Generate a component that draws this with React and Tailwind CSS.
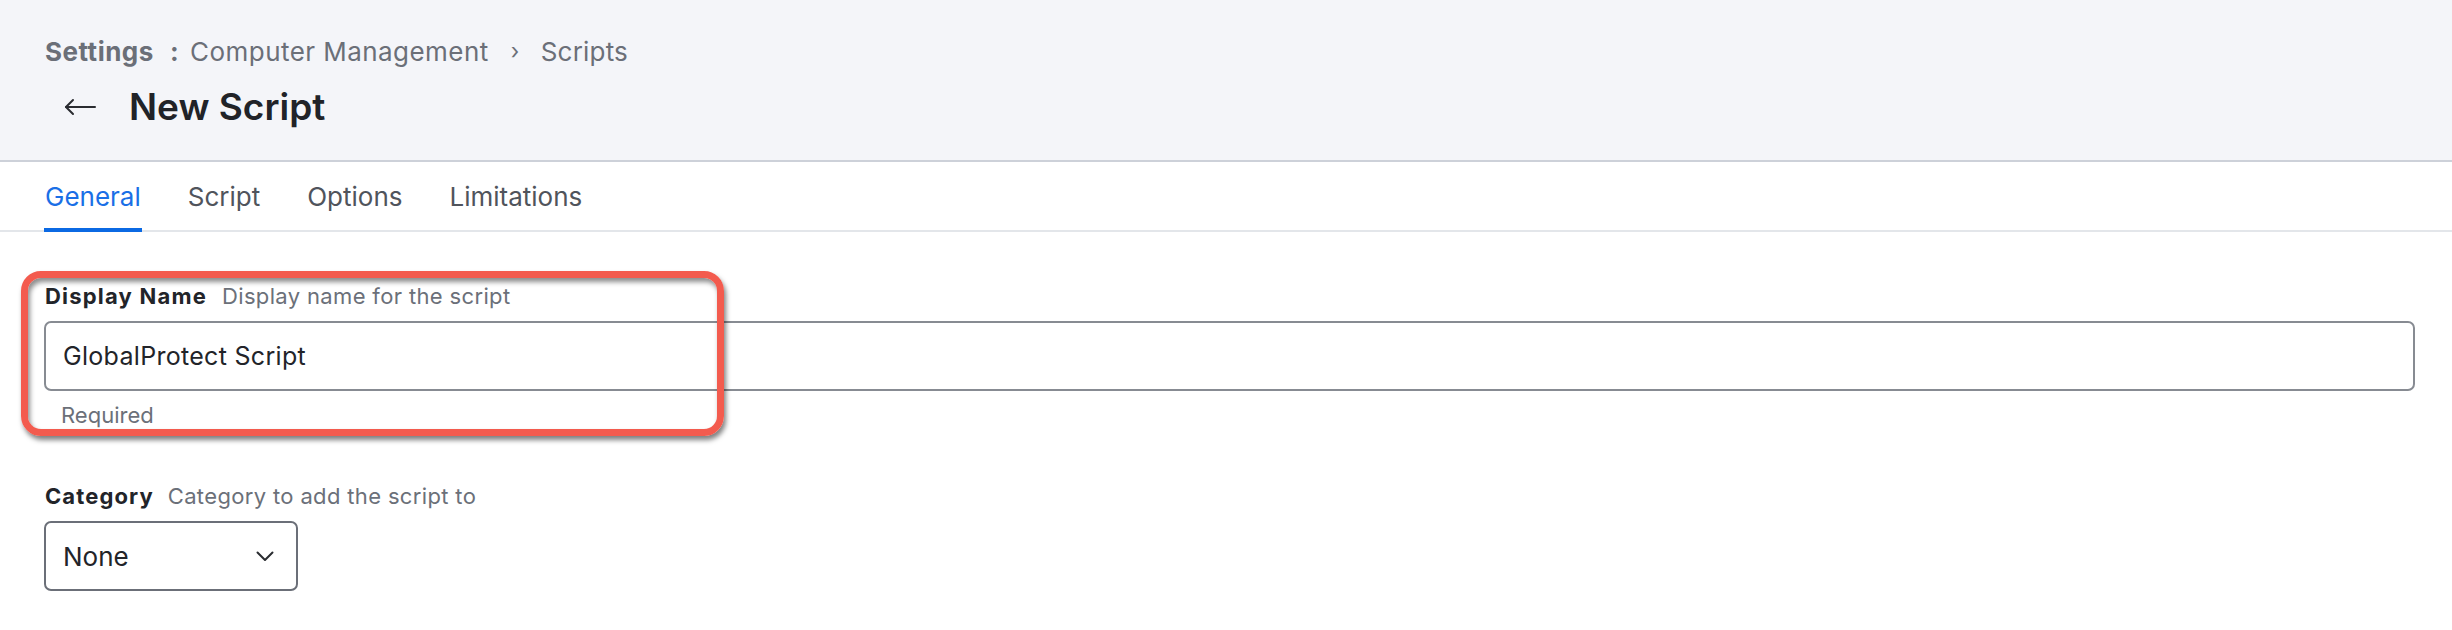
import { useState } from 'react'

const tabs = ['General', 'Script', 'Options', 'Limitations']

function BackArrow() {
  return (
    <svg width="32" height="18" viewBox="0 0 32 18" fill="none" stroke="#2a2c31" strokeWidth="2" strokeLinecap="round" strokeLinejoin="round">
      <path d="M31 9H2" />
      <path d="M9 2L2 9l7 7" />
    </svg>
  )
}

function Chevron() {
  return (
    <svg width="18" height="11" viewBox="0 0 18 11" fill="none" stroke="#2a2c31" strokeWidth="2" strokeLinecap="round" strokeLinejoin="round">
      <path d="M1.5 1.5L9 9l7.5-7.5" />
    </svg>
  )
}

export default function App() {
  const [active, setActive] = useState('General')
  const [name, setName] = useState('GlobalProtect Script')

  return (
    <div className="min-h-[630px] w-full bg-white font-['Inter',sans-serif]">
      {/* Header */}
      <header className="h-[162px] border-b-2 border-[#cdd1d9] bg-[#f4f5f9] pl-[45px] pt-[34px]">
        <nav className="flex h-[34px] items-center text-[26px] tracking-[0.5px] text-[#6b6f78]">
          <span className="font-bold">Settings</span>
          <span className="ml-[16px] mr-[11px] font-bold">:</span>
          <span className="tracking-[0.45px]">Computer Management</span>
          <span className="ml-[22px] mr-[21px] text-[22px]">›</span>
          <span className="tracking-[0.2px]">Scripts</span>
        </nav>
        <div className="mt-[17px] flex h-[44px] items-center">
          <button className="ml-[19px] mr-[33px] flex items-center">
            <BackArrow />
          </button>
          <h1 className="text-[37px] font-semibold text-[#212328]">New Script</h1>
        </div>
      </header>

      {/* Tabs */}
      <div className="flex h-[70px] gap-[47px] border-b-2 border-[#e3e6ea] pl-[45px]">
        {tabs.map((t) => (
          <button
            key={t}
            onClick={() => setActive(t)}
            className={`relative flex h-full items-center text-[26px] ${t === active ? 'text-[#1a6fe6]' : 'text-[#50545c]'}`}
          >
            {t}
            {t === active && <span className="absolute bottom-[-2px] left-[-1px] right-[-1px] h-[4px] bg-[#0b69e3]" />}
          </button>
        ))}
      </div>

      {/* Form */}
      <div className="relative pl-[44px] pr-[37px] pt-[50px]">
        <div className="flex h-[28px] items-center gap-[15px] pl-[1px] text-[22px]">
          <span className="font-bold tracking-[1.2px] text-[#222429]">Display Name</span>
          <span className="tracking-[0.35px] text-[#6b7079]">Display name for the script</span>
        </div>
        <input
          value={name}
          onChange={(e) => setName(e.target.value)}
          className="mt-[11px] h-[70px] w-full rounded-[7px] border-2 border-[#878b92] px-[17px] text-[25px] tracking-[0.3px] text-[#222429] outline-none"
        />
        <div className="mt-[11px] h-[26px] pl-[17px] text-[22px] leading-[26px] text-[#6b7079]">Required</div>

        <div className="mt-[54px] flex h-[28px] items-center gap-[14px] pl-[1px] text-[22px]">
          <span className="font-bold tracking-[1.1px] text-[#222429]">Category</span>
          <span className="tracking-[0.35px] text-[#6b7079]">Category to add the script to</span>
        </div>
        <button className="mt-[11px] flex h-[70px] w-[254px] items-center justify-between rounded-[7px] border-2 border-[#6b6f78] pl-[17px] pr-[22px] text-[26px] text-[#222429]">
          <span>None</span>
          <Chevron />
        </button>

        {/* annotation highlight */}
        <div className="pointer-events-none absolute left-[21px] top-[39px] h-[165px] w-[703px] rounded-[20px] border-[7px] border-[#f35b4e] shadow-[2px_4px_5px_rgba(0,0,0,0.5),inset_2px_4px_5px_rgba(0,0,0,0.45)]" />
      </div>
    </div>
  )
}
